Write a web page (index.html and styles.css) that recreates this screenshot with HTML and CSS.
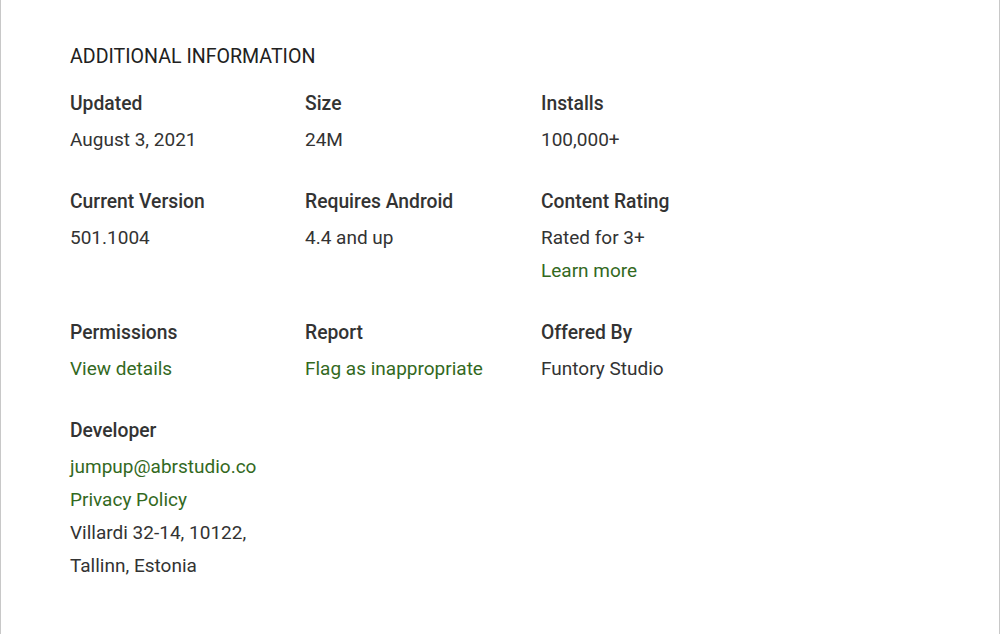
FILE: index.html
```html
<!DOCTYPE html>
<html>
<head>
<meta charset="utf-8">
<link rel="stylesheet" href="styles.css">
</head>
<body>
<div class="panel">
  <h2 class="title">ADDITIONAL INFORMATION</h2>
  <div class="grid">
    <div class="cell">
      <div class="label">Updated</div>
      <div class="value">August 3, 2021</div>
    </div>
    <div class="cell">
      <div class="label">Size</div>
      <div class="value">24M</div>
    </div>
    <div class="cell">
      <div class="label">Installs</div>
      <div class="value">100,000+</div>
    </div>
    <div class="cell">
      <div class="label">Current Version</div>
      <div class="value">501.1004</div>
    </div>
    <div class="cell">
      <div class="label">Requires Android</div>
      <div class="value">4.4 and up</div>
    </div>
    <div class="cell">
      <div class="label">Content Rating</div>
      <div class="value">Rated for 3+</div>
      <div class="value link">Learn more</div>
    </div>
    <div class="cell">
      <div class="label">Permissions</div>
      <div class="value link">View details</div>
    </div>
    <div class="cell">
      <div class="label">Report</div>
      <div class="value link">Flag as inappropriate</div>
    </div>
    <div class="cell">
      <div class="label">Offered By</div>
      <div class="value">Funtory Studio</div>
    </div>
    <div class="cell">
      <div class="label">Developer</div>
      <div class="value link">jumpup@abrstudio.co</div>
      <div class="value link">Privacy Policy</div>
      <div class="value">Villardi 32-14, 10122,</div>
      <div class="value">Tallinn, Estonia</div>
    </div>
  </div>
</div>
</body>
</html>
```
FILE: styles.css
```css
html, body {
  margin: 0;
  padding: 0;
  background: #fff;
}
body {
  font-family: Roboto, "Liberation Sans", Arial, sans-serif;
  color: #333;
}
.panel {
  box-sizing: border-box;
  width: 1000px;
  height: 634px;
  border-left: 1px solid #c8c8c8;
  border-right: 1px solid #c8c8c8;
  padding: 45px 0 0 69px;
}
.title {
  margin: 0;
  font-size: 19.6px;
  font-weight: 400;
  line-height: 24px;
  color: #212121;
}
.grid {
  display: grid;
  grid-template-columns: 235px 236px 236px;
  row-gap: 33px;
  margin-top: 22px;
}
.label {
  font-size: 19.3px;
  font-weight: 500;
  line-height: 24px;
  padding-top: 1px;
  margin-bottom: 7px;
  color: #333;
}
.value {
  font-size: 19px;
  line-height: 33px;
  color: #333;
}
.link {
  color: #33691e;
}
```
